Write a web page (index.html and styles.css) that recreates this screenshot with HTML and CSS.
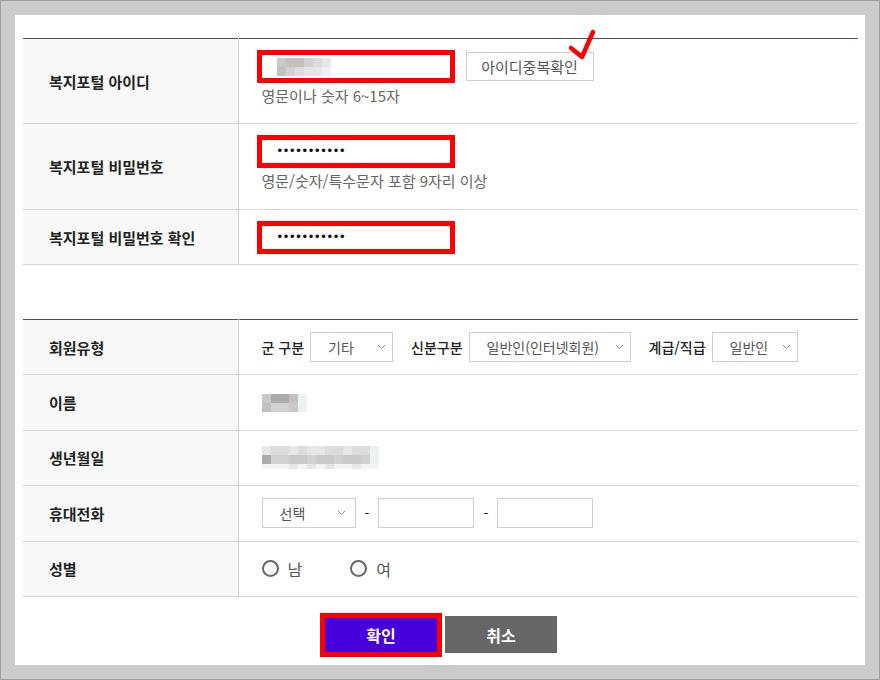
FILE: index.html
```html
<!DOCTYPE html>
<html lang="ko">
<head>
  <meta charset="UTF-8">
  <meta name="viewport" content="width=device-width, initial-scale=1.0">
  <title>회원가입</title>
  <link rel="stylesheet" href="styles.css">
</head>
<body>

<div class="wrap">
  <!-- 체크 표시 -->
  <svg class="check-mark" width="40" height="36" viewBox="0 0 40 36">
    <path d="M11 20 L22 29 L33 4" fill="none" stroke="#f00" stroke-width="4.5" stroke-linecap="round" stroke-linejoin="round"/>
  </svg>

  <!-- 계정 정보 -->
  <table class="form-table">
    <colgroup>
      <col class="col-label">
      <col>
    </colgroup>
    <tr>
      <th>복지포털 아이디</th>
      <td>
        <div class="field-row">
          <div class="red-box">
            <div class="mosaic mosaic-id">
              <span class="m3"></span><span class="m2"></span><span class="m2"></span><span class="m4"></span><span class="m5"></span><span class="m6"></span>
              <span class="m2"></span><span class="m4"></span><span class="m5"></span><span class="m6"></span><span class="m6"></span><span class="m7"></span>
            </div>
          </div>
          <button type="button" class="check-btn">아이디중복확인</button>
        </div>
        <p class="hint">영문이나 숫자 6~15자</p>
      </td>
    </tr>
    <tr class="mid">
      <th>복지포털 비밀번호</th>
      <td>
        <div class="red-box"><span class="dots">•••••••••••</span></div>
        <p class="hint">영문/숫자/특수문자 포함 9자리 이상</p>
      </td>
    </tr>
    <tr class="short">
      <th>복지포털 비밀번호 확인</th>
      <td>
        <div class="red-box"><span class="dots">•••••••••••</span></div>
      </td>
    </tr>
  </table>

  <!-- 회원 정보 -->
  <table class="form-table info-table">
    <colgroup>
      <col class="col-label">
      <col>
    </colgroup>
    <tr>
      <th>회원유형</th>
      <td>
        <div class="field-row">
          <span class="field-label">군 구분</span>
          <div class="select sel-army">기타<svg class="arrow" width="9" height="6" viewBox="0 0 9 6"><polyline points="1,1 4.5,4.5 8,1" fill="none" stroke="#8a8a8a" stroke-width="1"/></svg></div>
          <span class="field-label">신분구분</span>
          <div class="select sel-type">일반인(인터넷회원)<svg class="arrow" width="9" height="6" viewBox="0 0 9 6"><polyline points="1,1 4.5,4.5 8,1" fill="none" stroke="#8a8a8a" stroke-width="1"/></svg></div>
          <span class="field-label">계급/직급</span>
          <div class="select sel-rank">일반인<svg class="arrow" width="9" height="6" viewBox="0 0 9 6"><polyline points="1,1 4.5,4.5 8,1" fill="none" stroke="#8a8a8a" stroke-width="1"/></svg></div>
        </div>
      </td>
    </tr>
    <tr>
      <th>이름</th>
      <td>
        <div class="mosaic mosaic-name">
          <span class="m3"></span><span class="m1"></span><span class="m1"></span><span class="m2"></span><span class="m7"></span>
          <span class="m2"></span><span class="m4"></span><span class="m4"></span><span class="m3"></span><span class="m7"></span>
        </div>
      </td>
    </tr>
    <tr>
      <th>생년월일</th>
      <td>
        <div class="mosaic mosaic-birth">
          <span class="m6"></span><span class="m5"></span><span class="m5"></span><span class="m6"></span><span class="m5"></span><span class="m6"></span><span class="m6"></span><span class="m5"></span><span class="m5"></span><span class="m6"></span><span class="m5"></span><span class="m5"></span><span class="m7"></span>
          <span class="m1"></span><span class="m4"></span><span class="m4"></span><span class="m3"></span><span class="m3"></span><span class="m4"></span><span class="m3"></span><span class="m3"></span><span class="m4"></span><span class="m3"></span><span class="m3"></span><span class="m4"></span><span class="m7"></span>
          <span class="m8"></span><span class="m8"></span><span class="m8"></span><span class="m6"></span><span class="m8"></span><span class="m6"></span><span class="m8"></span><span class="m6"></span><span class="m8"></span><span class="m8"></span><span class="m6"></span><span class="m8"></span><span class="m8"></span>
        </div>
      </td>
    </tr>
    <tr>
      <th>휴대전화</th>
      <td>
        <div class="field-row phone">
          <div class="select sel-phone">선택<svg class="arrow" width="9" height="6" viewBox="0 0 9 6"><polyline points="1,1 4.5,4.5 8,1" fill="none" stroke="#8a8a8a" stroke-width="1"/></svg></div>
          <span class="dash">-</span>
          <input type="text" class="input-field">
          <span class="dash">-</span>
          <input type="text" class="input-field">
        </div>
      </td>
    </tr>
    <tr>
      <th>성별</th>
      <td>
        <div class="field-row">
          <label class="radio"><span class="circle"></span>남</label>
          <label class="radio"><span class="circle"></span>여</label>
        </div>
      </td>
    </tr>
  </table>

  <div class="btn-area">
    <button type="submit" class="btn btn-ok">확인</button>
    <button type="button" class="btn btn-cancel">취소</button>
  </div>
</div>

</body>
</html>
```

FILE: styles.css
```css
html {
  background-color: #cbcbcb;
}

body {
  margin: 0;
  width: 880px;
  height: 680px;
  box-sizing: border-box;
  border: 1px solid #9e9e9e;
  padding: 14px;
  background-color: #cbcbcb;
  font-family: "Noto Sans CJK KR", "Noto Sans", sans-serif;
  color: #222;
}

.wrap {
  position: relative;
  height: 650px;
  box-sizing: border-box;
  padding: 23px 7px 0 8px;
  background-color: #fff;
}

.check-mark {
  position: absolute;
  left: 545px;
  top: 13px;
}

.form-table {
  width: 835px;
  border-collapse: collapse;
  table-layout: fixed;
  border-top: 1px solid #4b4e64;
}

.col-label {
  width: 215px;
}

.form-table th {
  background-color: #f8f8f8;
  text-align: left;
  padding: 0 0 0 26px;
  font-size: 15px;
  font-weight: bold;
  color: #222;
  border-right: 1px solid #d5d5d5;
  border-bottom: 1px solid #d5d5d5;
}

.form-table td {
  padding: 11px 20px 16px 23px;
  border-bottom: 1px solid #d5d5d5;
  vertical-align: top;
}

.form-table tr.mid td {
  padding-bottom: 17px;
}

.form-table tr.short td {
  padding-bottom: 10px;
}

.field-row {
  display: flex;
  align-items: center;
}

.red-box {
  display: flex;
  align-items: center;
  width: 198px;
  height: 33px;
  box-sizing: border-box;
  margin-left: -5px;
  padding-left: 16px;
  border: 5px solid #ff0000;
}

.dots {
  font-family: "Liberation Sans", sans-serif;
  font-size: 13px;
  letter-spacing: 1.7px;
  color: #111;
  margin-top: -2px;
}

.check-btn {
  height: 29px;
  width: 128px;
  margin-left: 11px;
  border: 1px solid #cfcfcf;
  background-color: #fff;
  font-family: inherit;
  font-size: 15px;
  color: #555;
  padding: 0;
}

.hint {
  margin: 2px 0 0 0;
  font-size: 15px;
  line-height: 22px;
  color: #666;
}

/* 모자이크 처리 */
.mosaic {
  display: grid;
}

.mosaic span {
  display: block;
}

.mosaic-id {
  grid-template-columns: repeat(6, 9px);
  grid-auto-rows: 9px;
  margin-left: -1px;
}

.mosaic-name {
  grid-template-columns: repeat(5, 9px);
  grid-auto-rows: 9px;
}

.mosaic-birth {
  grid-template-columns: repeat(13, 9px);
  grid-template-rows: 9px 9px 5px;
}

.m1 { background-color: #aaaaad; }
.m2 { background-color: #c2bfbe; }
.m3 { background-color: #c9c9cb; }
.m4 { background-color: #d1d0d3; }
.m5 { background-color: #dcdcdf; }
.m6 { background-color: #e6e6e8; }
.m7 { background-color: #eef1f4; }
.m8 { background-color: #f4f4f5; }

.info-table {
  margin-top: 54px;
}

.info-table td {
  height: 55.4px;
  box-sizing: border-box;
  padding: 0 20px 0 23px;
  vertical-align: middle;
}

.field-label {
  font-size: 14px;
  font-weight: 500;
  color: #222;
  margin-right: 6px;
}

.select {
  display: flex;
  align-items: center;
  justify-content: space-between;
  height: 30px;
  box-sizing: border-box;
  padding: 0 6px 0 17px;
  border: 1px solid #cfcfcf;
  font-size: 14px;
  color: #555;
  margin-right: 18px;
}

.sel-army { width: 83px; }
.sel-type { width: 162px; }
.sel-rank { width: 86px; }
.sel-phone { width: 94px; margin-right: 0; padding-right: 9px; }

.arrow {
  flex-shrink: 0;
}

.dash {
  margin: 0 9px;
  font-size: 14px;
  color: #222;
}

.input-field {
  width: 96px;
  height: 30px;
  box-sizing: border-box;
  border: 1px solid #cfcfcf;
  padding: 0 8px;
  margin: 0;
}

.radio {
  display: flex;
  align-items: center;
  font-size: 16px;
  color: #555;
  margin-right: 48px;
}

.circle {
  width: 17px;
  height: 17px;
  box-sizing: border-box;
  border: 2px solid #666;
  border-radius: 50%;
  margin-right: 9px;
}

.btn-area {
  display: flex;
  justify-content: center;
  align-items: center;
  gap: 3px;
  margin-top: 16px;
  padding-right: 4px;
}

.btn {
  border: none;
  font-family: inherit;
  font-size: 16px;
  font-weight: bold;
  color: #fff;
  cursor: pointer;
  padding: 0;
}

.btn-ok {
  width: 122px;
  height: 44px;
  box-sizing: border-box;
  border: 5px solid #ff0000;
  background-color: #4500dc;
}

.btn-cancel {
  width: 112px;
  height: 37px;
  background-color: #666;
}
```
